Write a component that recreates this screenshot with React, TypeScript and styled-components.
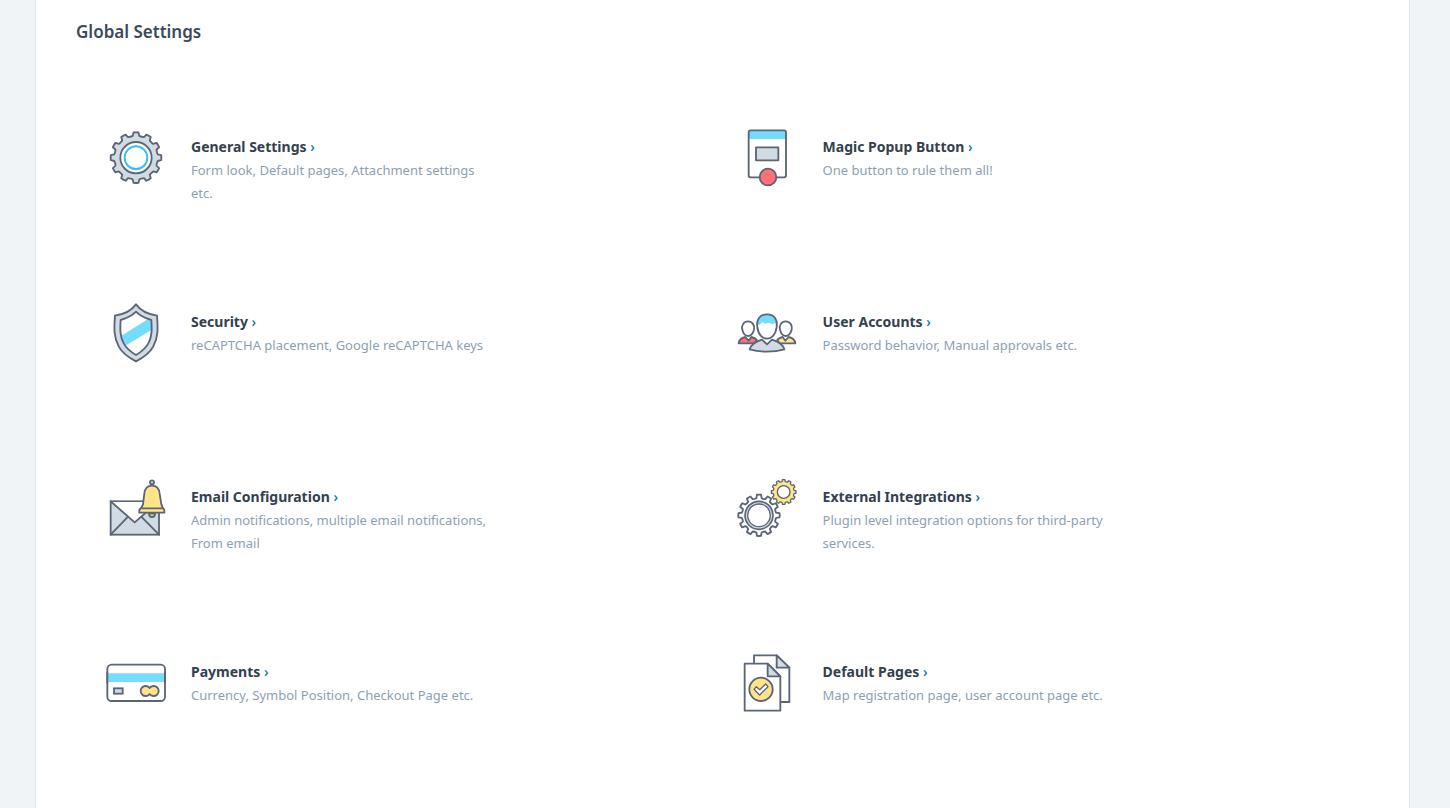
import React from "react";
import styled, { createGlobalStyle } from "styled-components";

const GlobalStyle = createGlobalStyle`
  *, *::before, *::after { box-sizing: border-box; }
  body {
    margin: 0;
    background: #f0f4f7;
    font-family: "Segoe UI", "Noto Sans", "Open Sans", sans-serif;
  }
`;

const Panel = styled.main`
  min-height: 100vh;
  margin: 0 40px 0 35px;
  padding: 20px 0 0;
  background: #fff;
  border: solid #e1e5e9;
  border-width: 0 1px;
`;

const PageTitle = styled.h1`
  margin: 0 40px;
  font-size: 17px;
  line-height: 24px;
  font-weight: 600;
  color: #3a4a5a;
`;

const SettingsGrid = styled.ul`
  display: grid;
  grid-template-columns: repeat(2, 46%);
  grid-auto-rows: minmax(175px, auto);
  margin: 0;
  padding: 84px 0 0;
  list-style: none;
`;

const SettingItem = styled.li`
  display: flex;
  align-items: flex-start;
  gap: 25px;
  padding-left: 70px;
`;

const IconImage = styled.svg`
  flex: none;
  width: 60px;
  height: 60px;
  overflow: visible;
  fill: none;
  stroke: #5a6577;
  stroke-width: 5.5;
  stroke-linejoin: round;
  stroke-linecap: round;
`;

const SettingText = styled.div`
  width: 300px;
  padding-top: 7px;
`;

const SettingLink = styled.a`
  display: block;
  font-size: 14px;
  line-height: 24px;
  font-weight: 700;
  color: #33414e;
  text-decoration: none;
`;

const Chevron = styled.span`
  font-weight: 500;
  color: #0073aa;
`;

const Description = styled.p`
  margin: 0;
  font-size: 13px;
  line-height: 23px;
  color: #8c9fb3;
`;

const GREY = "#d1dbe4";
const BLUE = "#74dcff";
const YELLOW = "#ffe588";
const RED = "#ff7077";

function gearPath(cx: number, cy: number, outer: number, root: number): string {
  const teeth = 12;
  const step = 360 / teeth;
  const point = (radius: number, turn: number) => {
    const a = ((turn * step - 90) * Math.PI) / 180;
    return `${(cx + radius * Math.cos(a)).toFixed(1)} ${(cy + radius * Math.sin(a)).toFixed(1)}`;
  };
  const parts: string[] = [];
  for (let i = 0; i < teeth; i++) {
    parts.push(`${i ? "L" : "M"}${point(root, i - 0.29)}`);
    parts.push(`L${point(outer, i - 0.19)}`);
    parts.push(`A${outer} ${outer} 0 0 1 ${point(outer, i + 0.19)}`);
    parts.push(`L${point(root, i + 0.29)}`);
    parts.push(`Q${point(root - 2, i + 0.5)} ${point(root, i + 0.71)}`);
  }
  return parts.join("") + "Z";
}

const Icon = ({ children }: { children: React.ReactNode }) => (
  <IconImage viewBox="18 15 180 180" aria-hidden="true">{children}</IconImage>
);

const GearIcon = () => (
  <Icon>
    <path d={gearPath(108, 104, 76, 66)} fill={GREY} />
    <circle cx="108" cy="104" r="47" fill="#fff" />
    <circle cx="108" cy="104" r="34" stroke="#38bfea" strokeWidth="6" />
  </Icon>
);

const PopupIcon = () => (
  <Icon>
    <rect x="50" y="22" width="112" height="141" rx="6" fill="#fff" stroke="none" />
    <path d="M50 48V28q0-6 6-6h100q6 0 6 6v20Z" fill={BLUE} stroke="none" />
    <rect x="50" y="22" width="112" height="141" rx="6" />
    <rect x="72" y="73" width="67" height="39" fill={GREY} />
    <circle cx="108" cy="162" r="25" fill={RED} />
  </Icon>
);

const ShieldIcon = () => (
  <Icon>
    <path d="M108 19C94 38 70 49 45 53C42 91 41 117 56 145C67 166 87 179 108 190C129 179 149 166 160 145C175 117 174 91 171 53C146 49 122 38 108 19Z" fill={GREY} />
    <path d="M108 41C96 53 80 61 62 66C60 96 60 116 71 136C80 152 93 162 108 171C123 162 136 152 145 136C156 116 156 96 154 66C136 61 120 53 108 41Z" fill="#fff" stroke="none" />
    <path d="M64 113L145 63L154 66Q157 84 153 97L76 143Q66 130 64 113Z" fill={BLUE} stroke="none" />
    <path d="M108 41C96 53 80 61 62 66C60 96 60 116 71 136C80 152 93 162 108 171C123 162 136 152 145 136C156 116 156 96 154 66C136 61 120 53 108 41Z" />
  </Icon>
);

const UsersIcon = () => (
  <Icon>
    <path d="M20 136Q22 121 40 117L50 128L58 117Q69 120 74 125L68 136Z" fill={RED} />
    <path d="M190 136Q188 121 170 117L160 128L152 117Q141 120 136 125L142 136Z" fill={YELLOW} />
    <path d="M48 70C35 70 28 82 31 95C34 109 41 114 48 114C55 114 62 109 66 95C69 82 61 70 48 70Z" fill="#fff" />
    <path d="M161 70C148 70 141 82 144 95C147 109 154 114 161 114C168 114 175 109 179 95C182 82 174 70 161 70Z" fill="#fff" />
    <path d="M53 154Q59 134 90 125L105 139L120 125Q151 134 157 154Q133 161 105 161T53 154Z" fill={GREY} />
    <path d="M105 49C82 49 73 66 76 87C79 111 92 122 105 122C118 122 131 111 134 87C137 66 128 49 105 49Z" fill="#fff" stroke="none" />
    <path d="M76 80C76 61 86 49 105 49C124 49 134 61 134 80L129 75L120 79L111 74L100 77L91 73L83 80Z" fill={BLUE} stroke="none" />
    <path d="M105 49C82 49 73 66 76 87C79 111 92 122 105 122C118 122 131 111 134 87C137 66 128 49 105 49Z" />
  </Icon>
);

const EmailIcon = () => (
  <Icon>
    <rect x="32" y="85" width="145" height="100" fill={GREY} strokeLinejoin="miter" />
    <path d="M34 87H175L104 148Z" fill="#fff" stroke="none" />
    <path d="M32 85L104 148L177 85M32 185L82 133M177 185L126 133" />
    <path d="M147 122Q147 132 156 132T165 122Z" fill={YELLOW} />
    <path d="M118 119V111Q125 105 129 94L133 62C135 43 143 38 156 38C169 38 177 43 179 62L184 94Q187 105 193 111V119Z" fill={YELLOW} />
    <path d="M127 106H185" />
    <circle cx="156" cy="28" r="6" fill={GREY} />
  </Icon>
);

const IntegrationsIcon = () => (
  <Icon>
    <path d={gearPath(81, 127, 62, 52)} fill="#fff" />
    <circle cx="81" cy="127" r="38" fill="#fff" stroke={GREY} strokeWidth="7" />
    <circle cx="81" cy="127" r="42" strokeWidth="5" />
    <circle cx="81" cy="127" r="34" strokeWidth="4" />
    <path d={gearPath(155, 57, 37, 32)} fill={YELLOW} strokeWidth="4" />
    <circle cx="155" cy="57" r="19" fill="#fff" strokeWidth="4" />
  </Icon>
);

const CardIcon = () => (
  <Icon>
    <rect x="22" y="50" width="173" height="109" rx="13" fill="#fff" />
    <path d="M24 76H193V102H24Z" fill={BLUE} stroke="none" />
    <path d="M22 74V104M195 74V104" />
    <rect x="42" y="121" width="26" height="16" fill={GREY} strokeLinejoin="miter" />
    <path d="M149 120A15 15 0 1 0 149 138A15 15 0 1 0 149 120Z" fill={YELLOW} />
  </Icon>
);

const PagesIcon = () => (
  <Icon>
    <path d="M66 22H134L172 59V162H66Z" fill="#fff" />
    <path d="M134 22V59H172Z" fill={GREY} />
    <path d="M38 47H107L145 85V188H38Z" fill="#fff" />
    <path d="M107 47V85H145Z" fill={GREY} />
    <circle cx="87" cy="124" r="35" fill={YELLOW} />
    <path d="M66 124L73 116L83 125L101 108L108 116L83 141Z" fill="#fff" strokeWidth="4" />
  </Icon>
);

const settings = [
  { title: "General Settings", text: "Form look, Default pages, Attachment settings etc.", Picture: GearIcon },
  { title: "Magic Popup Button", text: "One button to rule them all!", Picture: PopupIcon },
  { title: "Security", text: "reCAPTCHA placement, Google reCAPTCHA keys", Picture: ShieldIcon },
  { title: "User Accounts", text: "Password behavior, Manual approvals etc.", Picture: UsersIcon },
  { title: "Email Configuration", text: "Admin notifications, multiple email notifications, From email", Picture: EmailIcon },
  { title: "External Integrations", text: "Plugin level integration options for third-party services.", Picture: IntegrationsIcon },
  { title: "Payments", text: "Currency, Symbol Position, Checkout Page etc.", Picture: CardIcon },
  { title: "Default Pages", text: "Map registration page, user account page etc.", Picture: PagesIcon },
];

export default function App() {
  return (
    <>
      <GlobalStyle />
      <Panel>
        <PageTitle>Global Settings</PageTitle>
        <SettingsGrid>
          {settings.map(({ title, text, Picture }) => (
            <SettingItem key={title}>
              <Picture />
              <SettingText>
                <SettingLink href="#">
                  {title} <Chevron>›</Chevron>
                </SettingLink>
                <Description>{text}</Description>
              </SettingText>
            </SettingItem>
          ))}
        </SettingsGrid>
      </Panel>
    </>
  );
}
